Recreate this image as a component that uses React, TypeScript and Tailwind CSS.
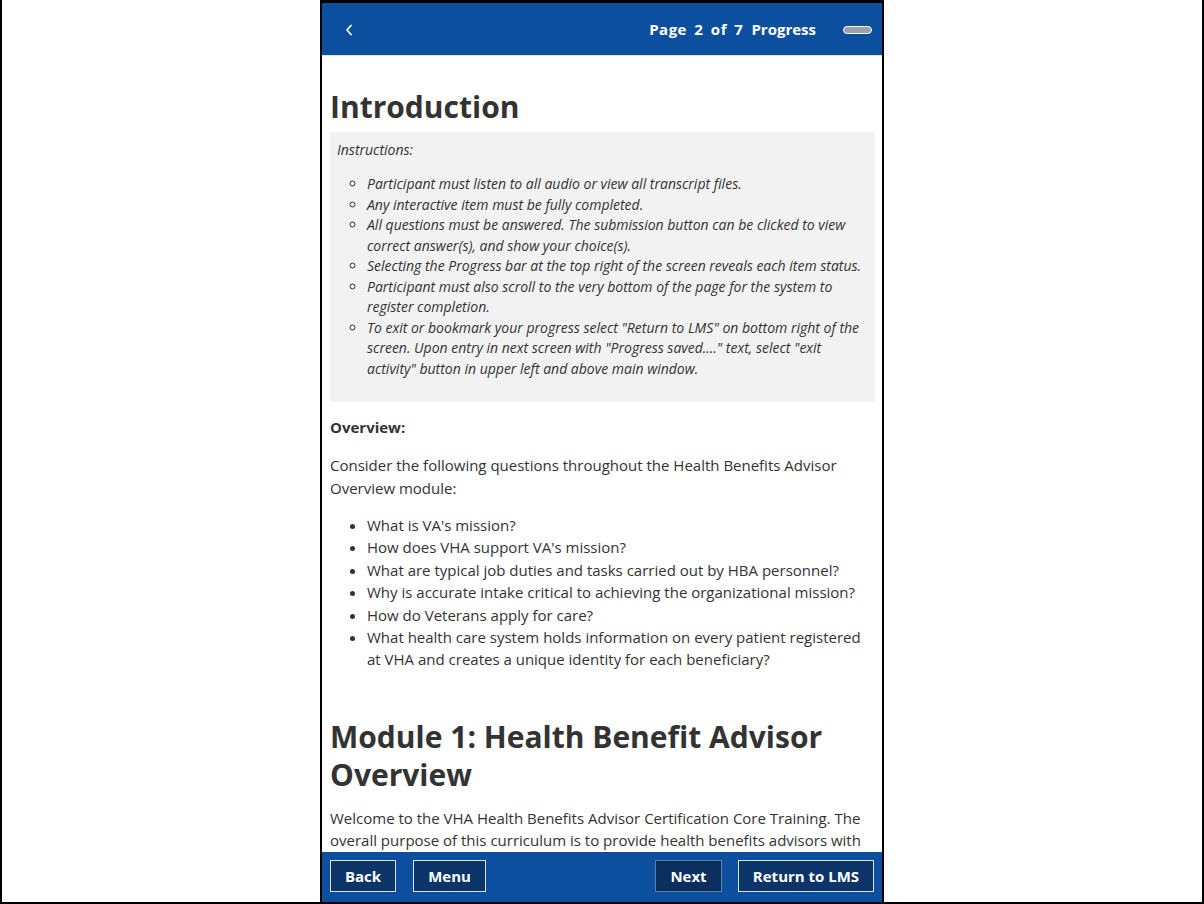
import React from 'react';

const instructions = [
  'Participant must listen to all audio or view all transcript files.',
  'Any interactive item must be fully completed.',
  'All questions must be answered. The submission button can be clicked to view correct answer(s), and show your choice(s).',
  'Selecting the Progress bar at the top right of the screen reveals each item status.',
  'Participant must also scroll to the very bottom of the page for the system to register completion.',
  'To exit or bookmark your progress select "Return to LMS" on bottom right of the screen. Upon entry in next screen with "Progress saved...." text, select "exit activity" button in upper left and above main window.',
];

const questions = [
  "What is VA's mission?",
  "How does VHA support VA's mission?",
  'What are typical job duties and tasks carried out by HBA personnel?',
  'Why is accurate intake critical to achieving the organizational mission?',
  'How do Veterans apply for care?',
  'What health care system holds information on every patient registered at VHA and creates a unique identity for each beneficiary?',
];

const Header: React.FC = () => (
  <div className="h-[53px] shrink-0 bg-[#0b4f9e] border-b border-[#dfe6ee] flex items-center pt-[1px] pl-[23px] pr-[10px] text-white">
    <svg width="8" height="12" viewBox="0 0 8 12">
      <polyline points="6,1.5 2,6 6,10.5" fill="none" stroke="white" strokeWidth="1.8" strokeLinecap="round" strokeLinejoin="round" />
    </svg>
    <div className="ml-auto flex items-center text-[15px] font-bold">
      <span className="[word-spacing:3px] tracking-[0.5px]">Page 2 of 7</span>
      <span className="ml-[8px]">Progress</span>
      <div className="ml-[27px] w-[29px] h-[8px] rounded-full bg-[#9aa1aa] border-[1.5px] border-white" />
    </div>
  </div>
);

const FooterButton: React.FC<{ label: string; width: string; dim?: boolean }> = ({ label, width, dim }) => (
  <button
    className={`${width} h-[32px] text-[15px] font-bold text-white border ${
      dim ? 'bg-[#0a2f5e] border-[#5d7fa6] text-[#dce6f0]' : 'bg-[#0b3468] border-[#d8e2ec]'
    }`}
  >
    {label}
  </button>
);

const Footer: React.FC = () => (
  <div className="h-[50px] shrink-0 bg-[#0b4f9e] flex items-start gap-[17px] pt-[8px] px-[8px]">
    <FooterButton label="Back" width="w-[66px]" />
    <FooterButton label="Menu" width="w-[73px]" />
    <div className="ml-auto flex gap-[16px]">
      <FooterButton label="Next" width="w-[67px]" dim />
      <FooterButton label="Return to LMS" width="w-[136px]" />
    </div>
  </div>
);

export default function App() {
  return (
    <div
      className="w-[1204px] h-[904px] bg-white border-x-2 border-b-2 border-black flex justify-center text-[#333]"
      style={{ fontFamily: '"Open Sans", "Noto Sans", sans-serif' }}
    >
      <div className="w-[564px] h-full border-x-2 border-t-[3px] border-black flex flex-col">
        <Header />
        <div className="flex-1 overflow-hidden pl-2 pr-[7px] pt-[32px]">
          <h1 className="text-[30px] leading-[38px] font-bold">Introduction</h1>

          <div className="mt-[6px] bg-[#f2f2f2] px-[7px] pt-[8px] pb-[23px] italic text-[14px] leading-[20.5px]">
            <p>Instructions:</p>
            <ul className="mt-[13.5px] pl-[30px] list-[circle]">
              {instructions.map((t) => (
                <li key={t}>{t}</li>
              ))}
            </ul>
          </div>

          <p className="mt-[15px] text-[15px] leading-[20px] font-bold">Overview:</p>
          <p className="mt-[17px] text-[15px] leading-[22.5px]">
            Consider the following questions throughout the Health Benefits Advisor Overview module:
          </p>
          <ul className="mt-[15px] pl-[37px] list-disc text-[15px] leading-[22.4px]">
            {questions.map((q) => (
              <li key={q}>{q}</li>
            ))}
          </ul>

          <h2 className="mt-[47px] text-[30px] leading-[38px] font-bold">
            Module 1: Health Benefit Advisor Overview
          </h2>
          <p className="mt-[13px] text-[15px] leading-[22.5px]">
            Welcome to the VHA Health Benefits Advisor Certification Core Training. The overall purpose of this
            curriculum is to provide health benefits advisors with the knowledge and skills needed to perform their
            duties.
          </p>
        </div>
        <Footer />
      </div>
    </div>
  );
}
